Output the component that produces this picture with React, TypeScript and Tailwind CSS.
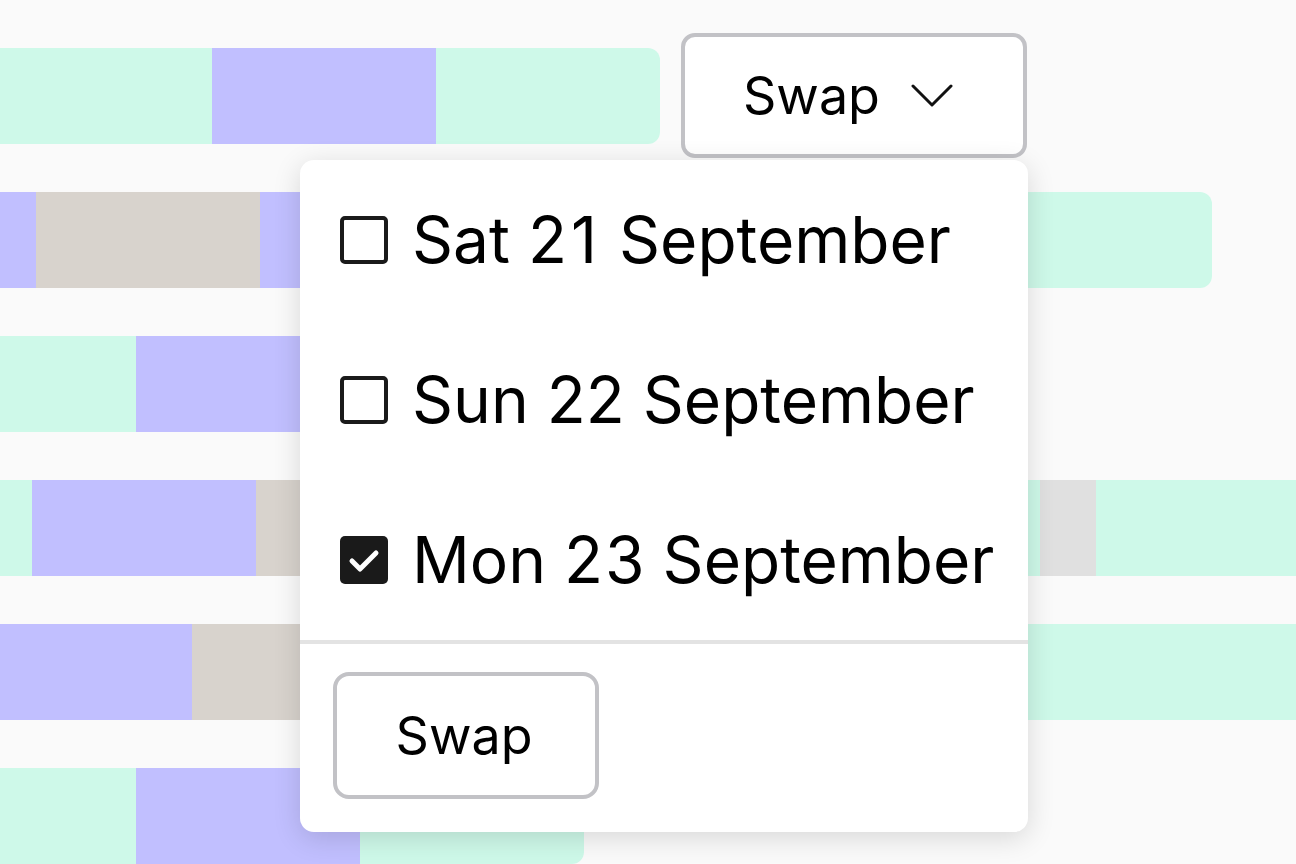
import React from "react";

const MINT = "bg-[#cef9e9]";
const PURPLE = "bg-[#c1bfff]";
const BEIGE = "bg-[#d8d3cd]";
const GRAY = "bg-[#e0e0e0]";

type Seg = { w: number; c: string; last?: boolean };

function Row({ segs }: { segs: Seg[] }) {
  return (
    <div className="flex h-[96px] shrink-0">
      {segs.map((s, i) => (
        <div
          key={i}
          className={`${s.c} h-full shrink-0 ${s.last ? "rounded-r-[12px]" : ""}`}
          style={{ width: s.w }}
        />
      ))}
    </div>
  );
}

function Box({ checked }: { checked?: boolean }) {
  if (checked) {
    return (
      <div className="w-[48px] h-[48px] rounded-[5px] bg-[#1a1a1a] shrink-0 flex items-center justify-center">
        <svg width="48" height="48" viewBox="0 0 48 48">
          <polyline points="12,25 20,33 36,17" fill="none" stroke="#fff" strokeWidth="5" strokeLinecap="round" strokeLinejoin="round" />
        </svg>
      </div>
    );
  }
  return <div className="w-[48px] h-[48px] rounded-[5px] border-[4px] border-[#1a1a1a] bg-white shrink-0" />;
}

export default function App() {
  const font = { fontFamily: "Inter, 'Noto Sans', sans-serif" };
  const items: { label: React.ReactNode; key: string; checked: boolean }[] = [
    { key: "sat", label: <>Sat 2<span className="mx-[4px]">1</span> September</>, checked: false },
    { key: "sun", label: "Sun 22 September", checked: false },
    { key: "mon", label: <>Mon 2<span className="ml-[2px]">3</span> September</>, checked: true },
  ];
  return (
    <div className="relative w-[1296px] h-[864px] overflow-hidden bg-[#fafafa]" style={font}>
      <div className="flex flex-col gap-[48px] pt-[48px]">
        <Row segs={[{ w: 212, c: MINT }, { w: 224, c: PURPLE }, { w: 224, c: MINT, last: true }]} />
        <Row segs={[{ w: 36, c: PURPLE }, { w: 224, c: BEIGE }, { w: 224, c: PURPLE }, { w: 728, c: MINT, last: true }]} />
        <Row segs={[{ w: 136, c: MINT }, { w: 224, c: PURPLE }, { w: 448, c: MINT, last: true }]} />
        <Row segs={[{ w: 32, c: MINT }, { w: 224, c: PURPLE }, { w: 224, c: BEIGE }, { w: 560, c: MINT }, { w: 56, c: GRAY }, { w: 300, c: MINT }]} />
        <Row segs={[{ w: 192, c: PURPLE }, { w: 224, c: BEIGE }, { w: 224, c: PURPLE }, { w: 700, c: MINT }]} />
        <Row segs={[{ w: 136, c: MINT }, { w: 224, c: PURPLE }, { w: 224, c: MINT, last: true }]} />
      </div>

      {/* Trigger */}
      <button className="absolute left-[681px] top-[33px] w-[346px] h-[125px] rounded-[14px] border-[4px] border-[#c2c2c6] bg-white flex items-center pl-[58px] text-black">
        <span className="text-[52px] leading-none">Swap</span>
        <svg className="ml-[31px]" width="42" height="24" viewBox="0 0 42 24">
          <polyline points="2,2 21,21 40,2" fill="none" stroke="#111" strokeWidth="3" strokeLinecap="round" strokeLinejoin="round" />
        </svg>
      </button>

      {/* Menu */}
      <div className="absolute left-[300px] top-[160px] w-[728px] h-[672px] rounded-[14px] bg-white shadow-[0_6px_28px_rgba(0,0,0,0.14)] flex flex-col">
        {items.map((it) => (
          <div key={it.key} className="h-[160px] flex items-center pl-[40px] gap-[24px] shrink-0">
            <Box checked={it.checked} />
            <span className="text-[64px] leading-none text-black">{it.label}</span>
          </div>
        ))}
        <div className="h-[4px] bg-[#e3e3e3] shrink-0" />
        <div className="pt-[28px] pl-[33px]">
          <button className="w-[266px] h-[127px] rounded-[16px] border-[4px] border-[#c2c2c6] bg-white flex items-center justify-center pr-[4px] text-[52px] leading-none text-black">
            Swap
          </button>
        </div>
      </div>
    </div>
  );
}
